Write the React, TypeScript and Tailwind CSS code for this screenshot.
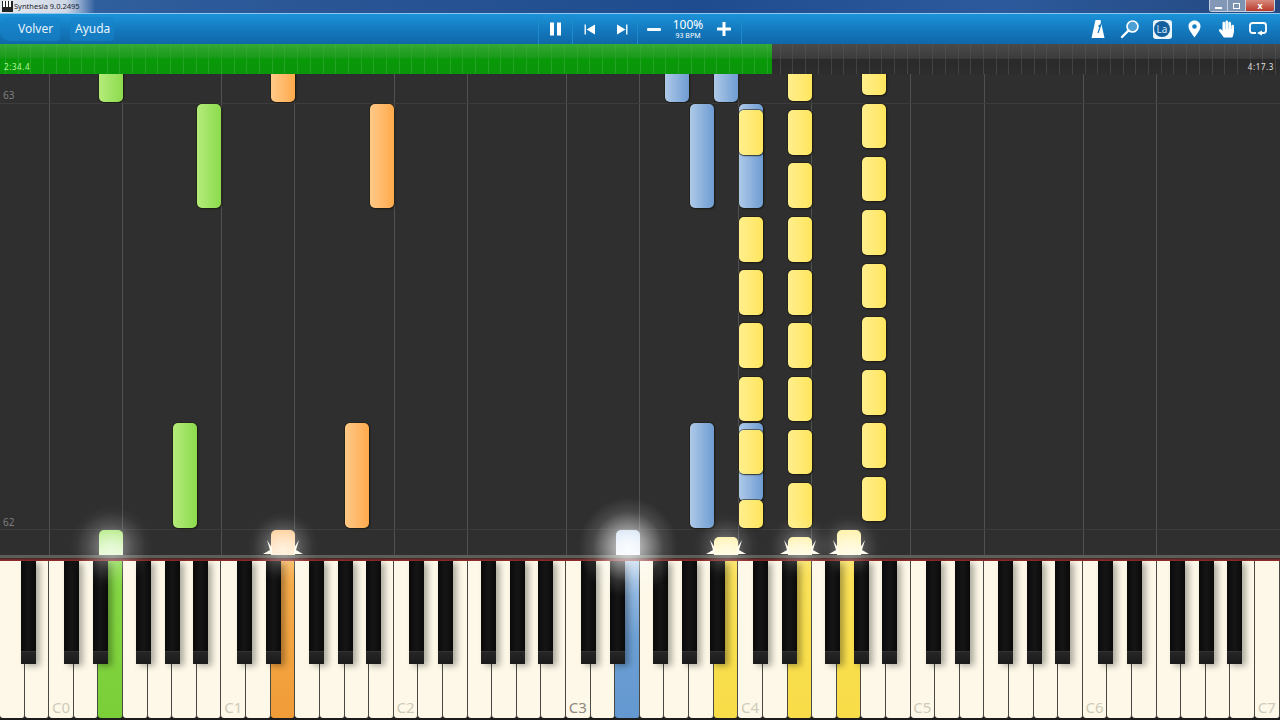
import React from "react";
import { FaHandPaper } from "react-icons/fa";

const KW = 1280 / 52;
const OCT = KW * 7;

const colors = {
  g: "from-[#b4ec7a] to-[#8cdb4c]",
  o: "from-[#ffc987] to-[#ffaa4a]",
  b: "from-[#aec9e8] to-[#6e9cd2]",
  y: "from-[#ffef8c] to-[#ffe55c]",
};
type C = keyof typeof colors;

const yA = [[110, 155], [217, 262], [270, 315], [323, 368], [377, 421], [430, 474], [500, 528]];
const yB = [[60, 101], [110, 155], [163, 208], [217, 262], [270, 315], [323, 368], [377, 421], [430, 474], [483, 528]];
const yC = [[60, 95], [104, 148], [157, 201], [210, 255], [264, 308], [317, 361], [370, 415], [423, 468], [477, 521]];

const notes: [number, number, number, C][] = [
  [4, 60, 102, "g"], [8, 104, 208, "g"], [7, 423, 528, "g"],
  [11, 60, 102, "o"], [15, 104, 208, "o"], [14, 423, 528, "o"],
  [27, 60, 102, "b"], [29, 60, 102, "b"], [28, 104, 208, "b"], [30, 104, 208, "b"], [28, 423, 528, "b"], [30, 423, 501, "b"],
  ...yA.map(([a, b]) => [30, a, b, "y"] as [number, number, number, C]),
  ...yB.map(([a, b]) => [32, a, b, "y"] as [number, number, number, C]),
  ...yC.map(([a, b]) => [35, a, b, "y"] as [number, number, number, C]),
];

const hits: [number, number, string][] = [
  [4, 530, "from-[#a8e870] to-[#e2f8cc]"],
  [11, 530, "from-[#ffc98c] to-[#ffe9cc]"],
  [25, 530, "from-[#bcd4ee] to-[#eef6ff]"],
  [29, 537, "from-[#fff1a0] to-[#fffbe0]"],
  [32, 537, "from-[#fff1a0] to-[#fffbe0]"],
  [34, 530, "from-[#fff1a0] to-[#fffbe0]"],
];

const soft = "bg-[radial-gradient(circle,rgba(255,255,255,0.5),rgba(255,255,255,0.14)_40%,rgba(255,255,255,0.03)_58%,transparent_70%)]";
const faint = "bg-[radial-gradient(circle,rgba(255,255,255,0.38),rgba(255,255,255,0.1)_40%,rgba(255,255,255,0.02)_58%,transparent_70%)]";
const strong = "bg-[radial-gradient(circle,rgba(255,255,255,0.85),rgba(255,255,255,0.45)_28%,rgba(255,255,255,0.12)_50%,transparent_70%)]";
const glows: [number, number, string][] = [
  [4, 42, soft],
  [11, 36, soft],
  [25, 50, strong],
  [29, 34, faint],
  [32, 34, faint],
  [34, 34, faint],
];

const pressed: Record<number, string> = {
  4: "from-[#86d846] via-[#80d43e] to-[#7ace38]",
  11: "from-[#f8b050] via-[#f4a540] to-[#f09c38]",
  25: "from-[#a8c8ea] via-[#6c9fd4] to-[#6398d0]",
  29: "from-[#fbe25c] via-[#fae04e] to-[#f8dc48]",
  32: "from-[#fbe25c] via-[#fae04e] to-[#f8dc48]",
  34: "from-[#fbe25c] via-[#fae04e] to-[#f8dc48]",
};

const labels: Record<number, [string, string]> = {
  2: ["C0", "text-[#cfcbb8]"],
  9: ["C1", "text-[#cfcbb8]"],
  16: ["C2", "text-[#cfcbb8]"],
  23: ["C3", "text-[#8d8a7e]"],
  30: ["C4", "text-[#cfcbb8]"],
  37: ["C5", "text-[#cfcbb8]"],
  44: ["C6", "text-[#cfcbb8]"],
  51: ["C7", "text-[#cfcbb8]"],
};

const blackX: number[] = [];
for (let o = -1; o < 8; o++) {
  for (const off of [15, 44, 87, 116, 144]) {
    const x = KW * 2 + o * OCT + off;
    if (x > 0 && x < 1260) blackX.push(Math.round(x));
  }
}

const vLines: number[] = [];
for (let o = 0; o < 7; o++) {
  vLines.push(Math.round(KW * 2 + o * OCT - 0.3), Math.round(KW * 5 + o * OCT - 0.9));
}

const ticks = Array.from({ length: 101 }, (_, i) => Math.round(i * 12.7 + 5));

function Sep() {
  return <div className="w-px h-full bg-[#1170b2] border-r border-[#1f8bce]" />;
}

function IconBtn({ children, w = "w-8" }: { children: React.ReactNode; w?: string }) {
  return <div className={`${w} h-full flex items-center justify-center`}>{children}</div>;
}

function Spark({ left }: { left: number }) {
  return (
    <svg className="absolute top-[465px] h-[15px] w-[46px] pointer-events-none" style={{ left }} viewBox="0 0 46 15">
      <path d="M3 15 L10 11 L7 1 L12 9 L12 15 Z M43 15 L36 11 L39 1 L34 9 L34 15 Z" fill="#fffdf0" />
    </svg>
  );
}

export default function App() {
  return (
    <div className="w-[1280px] h-[720px] flex flex-col overflow-hidden bg-black font-['Noto_Sans','Open_Sans',sans-serif]">
      {/* Title bar */}
      <div className="h-[14px] shrink-0 relative flex items-center bg-[linear-gradient(90deg,#e6e9ee_0,#cfd8e6_66px,#8aa6cc_80px,#305f9e_95px,#2a5696_300px,#1f4c8e_700px,#2c5a9c_1000px,#24487f_1280px)] border-b border-[#8ec6ee]">
        <div className="w-[11px] h-[11px] ml-0.5 flex gap-px bg-[#222] items-start px-px">
          <div className="w-[2px] h-[6px] bg-white" />
          <div className="w-[2px] h-[6px] bg-white" />
          <div className="w-[2px] h-[6px] bg-white" />
        </div>
        <span className="ml-px text-[7.5px] leading-none text-[#1c2430]">Synthesia 9.0.2495</span>
        <div className="absolute right-[5px] top-0 h-[12px] w-[66px] flex rounded-b-[3px] border border-t-0 border-[#c4d0e0] overflow-hidden">
          <div className="w-[18px] bg-[#8298b6] flex items-end justify-center pb-[2px] border-r border-[#c4d0e0]"><div className="w-[7px] h-[2px] bg-white" /></div>
          <div className="w-[18px] bg-[#7d93b2] flex items-center justify-center border-r border-[#c4d0e0]"><div className="w-[7px] h-[6px] border border-white" /></div>
          <div className="flex-1 bg-[linear-gradient(#d98a7c,#b83a2c)] flex items-center justify-center text-[9px] leading-none font-bold text-white">x</div>
        </div>
      </div>

      {/* Toolbar */}
      <div className="h-[30px] shrink-0 relative flex items-center justify-between bg-[linear-gradient(#1b93d9,#1478bd_55%,#0f68a8)]">
        <div className="flex items-center h-full text-[#e8f4fc] text-[12px]">
          <div className="w-[60px] h-[24px] flex items-center pl-[18px] bg-[#1883ca]/60 rounded-l-[10px] rounded-r-sm">Volver</div>
          <div className="w-[10px]" />
          <div className="w-[44px] h-[24px] flex items-center pl-[5px] bg-[#1883ca]/60 rounded-sm">Ayuda</div>
        </div>
        <div className="absolute left-[538px] top-0 h-full flex items-center">
          <Sep />
          <IconBtn w="w-[33px]">
            <svg width="13" height="14" viewBox="0 0 13 14"><rect x="1" y="0.5" width="4" height="13" fill="#fff" /><rect x="8" y="0.5" width="4" height="13" fill="#fff" /></svg>
          </IconBtn>
          <Sep />
          <IconBtn w="w-[33px]">
            <svg width="12" height="11" viewBox="0 0 12 11"><rect x="0.5" y="0.5" width="1.5" height="10" fill="#e6f3fb" /><path d="M11 0.5V10.5L2.5 5.5Z" fill="#fff" /></svg>
          </IconBtn>
          <IconBtn w="w-[31px]">
            <svg width="12" height="11" viewBox="0 0 12 11"><rect x="10" y="0.5" width="1.5" height="10" fill="#e6f3fb" /><path d="M1 0.5V10.5L9.5 5.5Z" fill="#fff" /></svg>
          </IconBtn>
          <Sep />
          <IconBtn w="w-[32px]">
            <div className="w-[14px] h-[3px] bg-[#f2f9fd] rounded-[1px]" />
          </IconBtn>
          <div className="w-[36px] flex flex-col items-center text-white">
            <span className="text-[12px] leading-[13px]">100%</span>
            <span className="text-[7px] leading-[9px] whitespace-nowrap">93 BPM</span>
          </div>
          <IconBtn w="w-[35px]">
            <svg width="14" height="14" viewBox="0 0 14 14"><rect x="0" y="5.5" width="14" height="3" rx="0.5" fill="#fff" /><rect x="5.5" y="0" width="3" height="14" rx="0.5" fill="#fff" /></svg>
          </IconBtn>
          <Sep />
        </div>
        <div className="flex items-center h-full pr-[6px] gap-0">
          <IconBtn w="w-[32px]">
            <svg width="14" height="20" viewBox="0 0 14 20"><path d="M4.5 1H9.5L13.5 19H0.5Z" fill="#fff" /><path d="M7 14L11 2" stroke="#1478bd" strokeWidth="1.2" /><circle cx="8.6" cy="7" r="1.2" fill="#1478bd" /></svg>
          </IconBtn>
          <IconBtn w="w-[32px]">
            <svg width="20" height="20" viewBox="0 0 20 20"><circle cx="12.5" cy="7.5" r="5.5" fill="#4d9fd4" stroke="#fff" strokeWidth="1.6" /><path d="M8.5 11.5L2 18" stroke="#fff" strokeWidth="2.4" strokeLinecap="round" /></svg>
          </IconBtn>
          <IconBtn w="w-[32px]">
            <div className="w-[19px] h-[19px] bg-[#eaf5fb] rounded-[3px] flex items-center justify-center">
              <div className="w-[16px] h-[16px] rounded-full bg-[#14609f] flex items-center justify-center text-[10px] leading-none text-[#cfe6f6]">La</div>
            </div>
          </IconBtn>
          <IconBtn w="w-[32px]">
            <svg width="13" height="18" viewBox="0 0 13 18"><path fillRule="evenodd" d="M6.5 0.5C3 0.5 0.5 3 0.5 6.3C0.5 10 4.5 14.5 6.5 17.5C8.5 14.5 12.5 10 12.5 6.3C12.5 3 10 0.5 6.5 0.5ZM6.5 4.2A2.3 2.3 0 1 1 6.5 8.8A2.3 2.3 0 1 1 6.5 4.2Z" fill="#fff" /></svg>
          </IconBtn>
          <IconBtn w="w-[32px]">
            <FaHandPaper className="text-white w-[15px] h-[18px]" />
          </IconBtn>
          <IconBtn w="w-[32px]">
            <svg width="18" height="14" viewBox="0 0 18 14" fill="none"><path d="M7 11H3.5C2 11 1 10 1 8.5V3.5C1 2 2 1 3.5 1H14.5C16 1 17 2 17 3.5V8.5C17 10 16 11 14.5 11H12" stroke="#fff" strokeWidth="1.8" /><path d="M13 8.5V13.5L8 11Z" fill="#fff" /></svg>
          </IconBtn>
        </div>
      </div>

      {/* Progress */}
      <div className="h-[30px] shrink-0 relative flex bg-[linear-gradient(#4a4a4a,#3c3c3c_48%,#2a2a2a_50%,#2d2d2d)]">
        <div className="w-[772px] h-full bg-[linear-gradient(#34a934,#1a9a1a_45%,#089908_50%,#0a960a)]" />
        {ticks.map((x) => (
          <div key={x} className="absolute top-0 bottom-0 w-px bg-[linear-gradient(rgba(255,255,255,0.05),rgba(255,255,255,0.05)_48%,rgba(255,255,255,0.11)_50%,rgba(255,255,255,0.11))]" style={{ left: x }} />
        ))}
        <span className="absolute left-[4px] bottom-[2px] text-[8px] leading-[10px] tracking-[0.6px] text-[#b8f8a0]">2:34.4</span>
        <span className="absolute right-[6px] bottom-[2px] text-[8px] leading-[10px] tracking-[0.6px] text-[#e0e0e0]">4:17.3</span>
      </div>

      {/* Stage: falling notes and keyboard */}
      <div className="flex-1 relative flex flex-col overflow-hidden">
        <div className="h-[481px] shrink-0 relative overflow-hidden bg-[#2f2f2f]">
          {vLines.map((x) => (
            <div key={x} className="absolute top-0 bottom-0 w-px bg-[#505050]" style={{ left: x }} />
          ))}
          <div className="absolute left-0 right-0 top-[29px] h-px bg-[#3c3c3c]" />
          <div className="absolute left-0 right-0 top-[455px] h-px bg-[#3c3c3c]" />
          <span className="absolute left-[3px] top-[15px] text-[10px] leading-[12px] text-[#7e7e7e]">63</span>
          <span className="absolute left-[3px] top-[442px] text-[10px] leading-[12px] text-[#7e7e7e]">62</span>
          {notes.map(([i, a, b, c], n) => (
            <div
              key={n}
              className={`absolute w-[24px] rounded-[5px] bg-linear-to-r ${colors[c]} shadow-[0_0_0_1px_rgba(30,28,15,0.55),1px_1px_2px_rgba(0,0,0,0.45)]`}
              style={{ left: i * KW + 0.5, top: a - 74, height: b - a }}
            />
          ))}
          {hits.map(([i, a, c]) => (
            <div
              key={i}
              className={`absolute w-[24px] rounded-t-[5px] bg-linear-to-b ${c}`}
              style={{ left: i * KW + 0.5, top: a - 74, height: 555 - a }}
            />
          ))}
        </div>

        {/* Rail */}
        <div className="h-[3px] shrink-0 bg-[#5e5e58]" />
        <div className="h-[3px] shrink-0 bg-[linear-gradient(#3a2a2a,#a02a2a)]" />

        {/* Keyboard */}
        <div className="flex-1 relative flex bg-[#1c1c1c] pb-[2px]">
          {Array.from({ length: 52 }, (_, i) => (
            <div
              key={i}
              className={`flex-1 h-full relative flex items-end justify-center rounded-b-[3px] border-r border-[#4a4a42] ${pressed[i] ? `bg-linear-to-b ${pressed[i]}` : "bg-[#fdf8e8]"}`}
            >
              {labels[i] && <span className={`text-[15px] leading-[22px] ${labels[i][1]}`}>{labels[i][0]}</span>}
            </div>
          ))}
          {blackX.map((x) => (
            <div
              key={x}
              className="absolute top-0 w-[15px] h-[103px] flex flex-col justify-end bg-[linear-gradient(90deg,#0a0a0a,#151515_50%,#0a0a0a)] rounded-b-[1px] shadow-[4px_2px_6px_rgba(0,0,0,0.32)]"
              style={{ left: x }}
            >
              <div className="h-[13px] border-t border-[#333] bg-[linear-gradient(#262626,#1a1a1a)]" />
            </div>
          ))}
        </div>

        {/* Glows over rail and keys */}
        {glows.map(([i, r, c]) => (
          <div
            key={i}
            className={`absolute rounded-full pointer-events-none ${c}`}
            style={{ left: (i + 0.5) * KW - r, top: 473 - r, width: r * 2, height: r * 2 }}
          />
        ))}
        {[11, 29, 32, 34].map((i) => (
          <Spark key={i} left={(i + 0.5) * KW - 23} />
        ))}
      </div>
    </div>
  );
}
